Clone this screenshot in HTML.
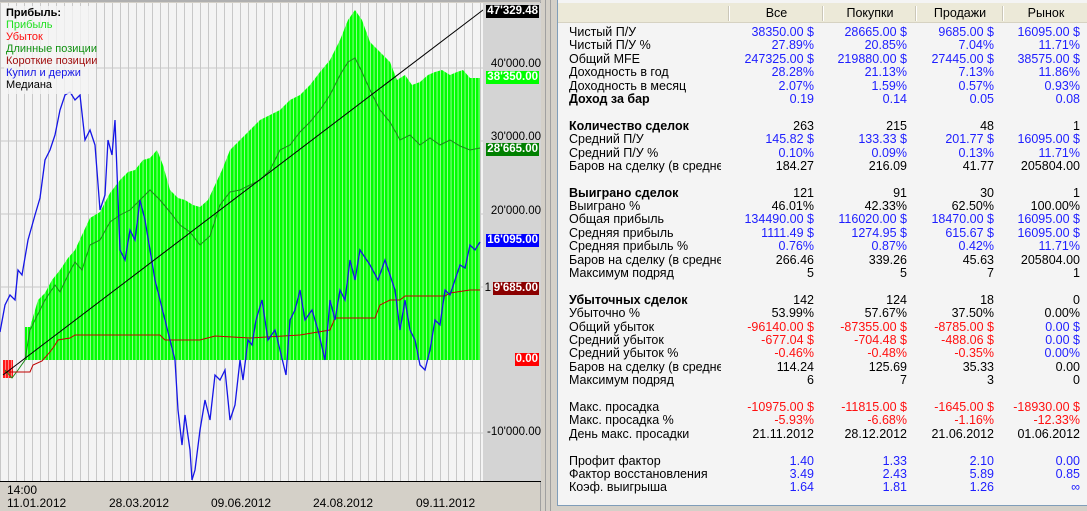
<!DOCTYPE html>
<html><head><meta charset="utf-8"><style>
*{margin:0;padding:0;box-sizing:border-box}
body{width:1087px;height:511px;background:#d4d0c8;position:relative;overflow:hidden;font-family:"Liberation Sans","DejaVu Sans",sans-serif;font-size:11px}
.abs{position:absolute}
.ax{position:absolute;right:0;width:64px;text-align:right;font-size:11.5px;line-height:13px;color:#000;white-space:nowrap}
.tag{position:absolute;right:2px;font-size:11.5px;line-height:13px;padding:0 1px;font-weight:bold;color:#fff}
#tbl{position:absolute;left:557px;top:0;width:530px;height:506px;background:#f4f4f4;border-left:1px solid #7f9db9;border-bottom:1px solid #7f9db9;overflow:hidden}
#hdr{position:absolute;left:0;top:3px;width:530px;height:20px;background:#ece9d8;border-bottom:1px solid #d6d2c2}
#hdr span{position:absolute;top:3px;text-align:center;font-size:12.5px}
.sep{position:absolute;top:3px;width:2px;height:15px;border-left:1px solid #cbc7b8;border-right:1px solid #fff}
#rows{position:absolute;left:11px;top:26px}
.r{height:13.4px;line-height:13.4px;position:relative;white-space:nowrap;font-size:12.5px}
.r span{position:absolute;top:0;text-align:right}
.r .l{left:0;width:152px;text-align:left;overflow:hidden}
.r .a{left:152px;width:93px}
.r .b{left:245px;width:93px}
.r .c{left:338px;width:87px}
.r .d{left:425px;width:86px}
.bl{color:#1e1eff}.rd{color:#ff1010}.bk{color:#000}
.bo .l{font-weight:bold}
.dt{position:absolute;top:497px;font-size:12px;line-height:13px}
</style></head><body>
<div class="abs" style="left:0;top:0;width:541px;height:511px;background:#d4d0c8;border-right:1px solid #a0a0a0"></div>
<div class="abs" style="left:545px;top:0;width:1px;height:511px;background:#a0a0a0"></div>
<div class="abs" style="left:550px;top:0;width:1px;height:511px;background:#a0a0a0"></div>
<svg class="abs" style="left:0;top:0" width="541" height="511">
<defs>
<pattern id="vg" width="8" height="10" patternUnits="userSpaceOnUse"><rect x="0" y="0" width="1" height="10" fill="#c8c8c8"/></pattern>
<pattern id="gb" width="3.5" height="10" patternUnits="userSpaceOnUse"><rect width="3.5" height="10" fill="#00ff00"/><rect x="2.6" width="0.9" height="10" fill="#9cff9c"/></pattern>
<pattern id="rb" width="3" height="10" patternUnits="userSpaceOnUse"><rect width="3" height="10" fill="#ff1a1a"/><rect x="2.2" width="0.8" height="10" fill="#ff9c9c"/></pattern>
</defs>
<rect x="0" y="3" width="483" height="478" fill="#f4f4f4"/>
<rect x="0" y="3" width="483" height="478" fill="url(#vg)"/>
<rect x="0" y="0" width="541" height="2" fill="#b0b0b0"/>
<g stroke="#c8c8c8" stroke-width="1">
<line x1="0" y1="68" x2="483" y2="68"/><line x1="0" y1="141" x2="483" y2="141"/><line x1="0" y1="214" x2="483" y2="214"/><line x1="0" y1="287" x2="483" y2="287"/><line x1="0" y1="433" x2="483" y2="433"/>
</g>
<polygon fill="url(#gb)" points="25,360 25,327 30,327 38,300 45,293 52,280 60,270 68,258 75,250 82,235 90,218 100,212 110,193 120,180 128,172 135,170 143,160 150,158 157,150 163,165 170,190 178,198 185,200 193,205 200,207 208,200 215,185 222,170 230,150 240,140 250,130 260,120 270,115 280,110 290,100 300,95 310,85 320,72 330,60 340,40 348,20 355,10 362,20 370,42 380,52 390,62 397,80 405,75 412,85 420,82 428,75 435,72 442,70 450,75 457,72 463,70 470,78 480,78 480,360"/>
<rect x="3" y="360" width="10" height="18" fill="url(#rb)"/>
<polyline fill="none" stroke="#1a8c1a" stroke-width="1" points="5,370 12,378 18,370 25,360 30,330 40,310 45,300 55,285 60,292 68,275 75,262 82,270 90,245 100,240 110,222 120,215 130,210 140,200 150,190 160,200 170,212 180,225 190,232 200,245 210,236 220,205 230,192 240,190 250,185 260,180 270,170 280,150 290,145 300,132 310,122 320,110 330,95 340,75 348,62 355,58 362,72 370,90 380,110 390,122 400,140 410,135 420,145 430,138 440,145 450,140 460,146 470,150 480,148"/>
<polyline fill="none" stroke="#c00000" stroke-width="1" points="5,372 30,372 33,365 42,361 50,352 55,345 58,340 70,338 75,335 160,335 165,340 200,340 215,336 250,338 300,335 330,330 335,318 375,318 380,305 390,300 400,300 405,296 420,296 445,296 450,293 470,290 480,290"/>
<polyline fill="none" stroke="#1515e6" stroke-width="1.3" points="0,332 5,305 10,295 15,300 18,270 22,275 28,240 35,215 40,198 45,160 50,150 55,135 60,110 65,95 70,92 75,100 80,95 85,140 90,130 95,145 100,210 105,195 108,140 112,155 115,120 120,250 125,260 130,230 135,240 140,200 145,220 150,250 155,280 160,300 165,320 170,340 175,360 178,410 182,445 185,415 190,450 192,480 195,470 200,430 205,400 210,420 215,375 220,380 225,370 230,420 235,405 240,360 243,380 248,340 252,345 256,320 262,300 268,340 275,330 280,350 286,375 290,320 295,310 300,290 305,320 312,310 318,330 325,360 330,300 335,320 340,290 345,300 350,260 355,280 360,250 370,265 378,280 385,260 390,275 395,290 400,330 405,300 410,330 415,340 420,365 425,370 430,350 435,320 440,325 445,290 450,295 455,280 460,265 465,268 470,245 475,250 480,242"/>
<line x1="3" y1="375" x2="483" y2="10" stroke="#000" stroke-width="1"/>
<rect x="483" y="3" width="58" height="478" fill="#d4d4d4"/>
<line x1="0" y1="481.5" x2="541" y2="481.5" stroke="#000"/>
</svg>
<div class="abs" style="left:4px;top:6px;width:92px;height:88px;background:rgba(244,244,244,0.8)"></div>
<div class="abs" style="left:6px;top:7px;font-size:11px;line-height:12px">
<div style="font-weight:bold">Прибыль:</div>
<div style="color:#20e020">Прибыль</div>
<div style="color:#ff1010">Убыток</div>
<div style="color:#109010">Длинные позиции</div>
<div style="color:#a01010">Короткие позиции</div>
<div style="color:#1515e6">Купил и держи</div>
<div>Медиана</div>
</div>
<div class="abs" style="left:476px;top:0;width:65px;height:480px">
<div class="ax" style="top:58px">40'000.00</div>
<div class="ax" style="top:131px">30'000.00</div>
<div class="ax" style="top:205px">20'000.00</div>
<div class="ax" style="top:282px;right:50px">1</div>
<div class="ax" style="top:426px">-10'000.00</div>
<div class="tag" style="top:5px;background:#000">47'329.48</div>
<div class="tag" style="top:71px;background:#00ff00">38'350.00</div>
<div class="tag" style="top:143px;background:#008000">28'665.00</div>
<div class="tag" style="top:234px;background:#0000ff">16'095.00</div>
<div class="tag" style="top:282px;background:#8b0000">9'685.00</div>
<div class="tag" style="top:353px;background:#ff0000">0.00</div>
</div>
<div class="abs" style="left:7px;top:484px;font-size:12px;line-height:13px">14:00</div>
<div class="dt" style="left:7px">11.01.2012</div>
<div class="dt" style="left:109px">28.03.2012</div>
<div class="dt" style="left:211px">09.06.2012</div>
<div class="dt" style="left:313px">24.08.2012</div>
<div class="dt" style="left:416px">09.11.2012</div>

<div id="tbl">
<div id="hdr">
<div class="sep" style="left:170px"></div><div class="sep" style="left:264px"></div><div class="sep" style="left:357px"></div><div class="sep" style="left:444px"></div>
<span style="left:172px;width:93px">Все</span>
<span style="left:266px;width:92px">Покупки</span>
<span style="left:359px;width:86px">Продажи</span>
<span style="left:446px;width:84px">Рынок</span>
</div>
<div id="rows">
<div class="r"><span class="l">Чистый П/У</span><span class="a bl">38350.00 $</span><span class="b bl">28665.00 $</span><span class="c bl">9685.00 $</span><span class="d bl">16095.00 $</span></div>
<div class="r"><span class="l">Чистый П/У %</span><span class="a bl">27.89%</span><span class="b bl">20.85%</span><span class="c bl">7.04%</span><span class="d bl">11.71%</span></div>
<div class="r"><span class="l">Общий MFE</span><span class="a bl">247325.00 $</span><span class="b bl">219880.00 $</span><span class="c bl">27445.00 $</span><span class="d bl">38575.00 $</span></div>
<div class="r"><span class="l">Доходность в год</span><span class="a bl">28.28%</span><span class="b bl">21.13%</span><span class="c bl">7.13%</span><span class="d bl">11.86%</span></div>
<div class="r"><span class="l">Доходность в месяц</span><span class="a bl">2.07%</span><span class="b bl">1.59%</span><span class="c bl">0.57%</span><span class="d bl">0.93%</span></div>
<div class="r bo"><span class="l">Доход за бар</span><span class="a bl">0.19</span><span class="b bl">0.14</span><span class="c bl">0.05</span><span class="d bl">0.08</span></div>
<div class="r"></div>
<div class="r bo"><span class="l">Количество сделок</span><span class="a bk">263</span><span class="b bk">215</span><span class="c bk">48</span><span class="d bk">1</span></div>
<div class="r"><span class="l">Средний П/У</span><span class="a bl">145.82 $</span><span class="b bl">133.33 $</span><span class="c bl">201.77 $</span><span class="d bl">16095.00 $</span></div>
<div class="r"><span class="l">Средний П/У %</span><span class="a bl">0.10%</span><span class="b bl">0.09%</span><span class="c bl">0.13%</span><span class="d bl">11.71%</span></div>
<div class="r"><span class="l">Баров на сделку (в среднем)</span><span class="a bk">184.27</span><span class="b bk">216.09</span><span class="c bk">41.77</span><span class="d bk">205804.00</span></div>
<div class="r"></div>
<div class="r bo"><span class="l">Выиграно сделок</span><span class="a bk">121</span><span class="b bk">91</span><span class="c bk">30</span><span class="d bk">1</span></div>
<div class="r"><span class="l">Выиграно %</span><span class="a bk">46.01%</span><span class="b bk">42.33%</span><span class="c bk">62.50%</span><span class="d bk">100.00%</span></div>
<div class="r"><span class="l">Общая прибыль</span><span class="a bl">134490.00 $</span><span class="b bl">116020.00 $</span><span class="c bl">18470.00 $</span><span class="d bl">16095.00 $</span></div>
<div class="r"><span class="l">Средняя прибыль</span><span class="a bl">1111.49 $</span><span class="b bl">1274.95 $</span><span class="c bl">615.67 $</span><span class="d bl">16095.00 $</span></div>
<div class="r"><span class="l">Средняя прибыль %</span><span class="a bl">0.76%</span><span class="b bl">0.87%</span><span class="c bl">0.42%</span><span class="d bl">11.71%</span></div>
<div class="r"><span class="l">Баров на сделку (в среднем)</span><span class="a bk">266.46</span><span class="b bk">339.26</span><span class="c bk">45.63</span><span class="d bk">205804.00</span></div>
<div class="r"><span class="l">Максимум подряд</span><span class="a bk">5</span><span class="b bk">5</span><span class="c bk">7</span><span class="d bk">1</span></div>
<div class="r"></div>
<div class="r bo"><span class="l">Убыточных сделок</span><span class="a bk">142</span><span class="b bk">124</span><span class="c bk">18</span><span class="d bk">0</span></div>
<div class="r"><span class="l">Убыточно %</span><span class="a bk">53.99%</span><span class="b bk">57.67%</span><span class="c bk">37.50%</span><span class="d bk">0.00%</span></div>
<div class="r"><span class="l">Общий убыток</span><span class="a rd">-96140.00 $</span><span class="b rd">-87355.00 $</span><span class="c rd">-8785.00 $</span><span class="d bl">0.00 $</span></div>
<div class="r"><span class="l">Средний убыток</span><span class="a rd">-677.04 $</span><span class="b rd">-704.48 $</span><span class="c rd">-488.06 $</span><span class="d bl">0.00 $</span></div>
<div class="r"><span class="l">Средний убыток %</span><span class="a rd">-0.46%</span><span class="b rd">-0.48%</span><span class="c rd">-0.35%</span><span class="d bl">0.00%</span></div>
<div class="r"><span class="l">Баров на сделку (в среднем)</span><span class="a bk">114.24</span><span class="b bk">125.69</span><span class="c bk">35.33</span><span class="d bk">0.00</span></div>
<div class="r"><span class="l">Максимум подряд</span><span class="a bk">6</span><span class="b bk">7</span><span class="c bk">3</span><span class="d bk">0</span></div>
<div class="r"></div>
<div class="r"><span class="l">Макс. просадка</span><span class="a rd">-10975.00 $</span><span class="b rd">-11815.00 $</span><span class="c rd">-1645.00 $</span><span class="d rd">-18930.00 $</span></div>
<div class="r"><span class="l">Макс. просадка %</span><span class="a rd">-5.93%</span><span class="b rd">-6.68%</span><span class="c rd">-1.16%</span><span class="d rd">-12.33%</span></div>
<div class="r"><span class="l">День макс. просадки</span><span class="a bk">21.11.2012</span><span class="b bk">28.12.2012</span><span class="c bk">21.06.2012</span><span class="d bk">01.06.2012</span></div>
<div class="r"></div>
<div class="r"><span class="l">Профит фактор</span><span class="a bl">1.40</span><span class="b bl">1.33</span><span class="c bl">2.10</span><span class="d bl">0.00</span></div>
<div class="r"><span class="l">Фактор восстановления</span><span class="a bl">3.49</span><span class="b bl">2.43</span><span class="c bl">5.89</span><span class="d bl">0.85</span></div>
<div class="r"><span class="l">Коэф. выигрыша</span><span class="a bl">1.64</span><span class="b bl">1.81</span><span class="c bl">1.26</span><span class="d bl">∞</span></div>
</div>
</div>
</body></html>
